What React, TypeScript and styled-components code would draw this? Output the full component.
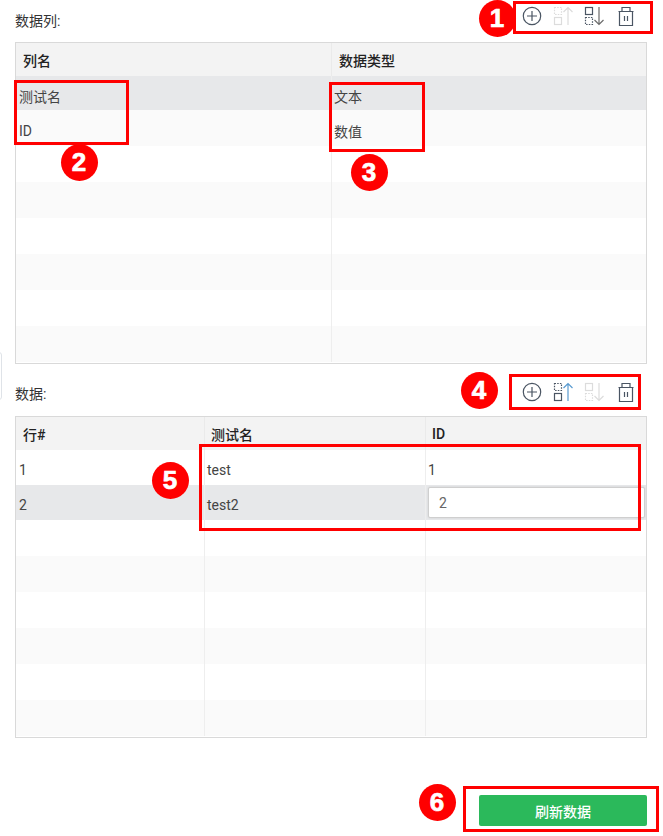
import React from "react";
import styled, { createGlobalStyle } from "styled-components";

const Global = createGlobalStyle`
  html, body { margin: 0; padding: 0; background: #fff; }
  body { font-family: Roboto, "Noto Sans CJK SC", sans-serif; font-size: 14px; color: #333; }
`;

const Page = styled.div`
  position: relative;
  width: 663px;
  height: 836px;
  overflow: hidden;
  padding: 0 16px 0 15px;
  box-sizing: border-box;
`;
const SectionHead = styled.div<{ $h: number; $iconY: number }>`
  height: ${(p) => p.$h}px;
  display: flex;
  justify-content: space-between;
  align-items: flex-start;
  padding-top: ${(p) => p.$iconY}px;
  box-sizing: border-box;
`;
const Label = styled.div<{ $top: number }>`
  margin-top: ${(p) => p.$top}px;
  font-size: 14px;
  line-height: 18px;
  color: #333;
`;
const Toolbar = styled.div`
  display: flex;
  gap: 9px;
  padding-right: 11px;
`;
const IconBtn = styled.span`
  display: block;
  width: 22px;
  height: 22px;
`;
const TableBox = styled.div`
  border: 1px solid #d9d9d9;
  height: 322px;
  box-sizing: border-box;
  overflow: hidden;
`;
const Row = styled.div<{ $cols: string; $h: number; $bg: string }>`
  display: grid;
  grid-template-columns: ${(p) => p.$cols};
  height: ${(p) => p.$h}px;
  background: ${(p) => p.$bg};
`;
const HeadCell = styled.div<{ $pad?: number }>`
  border-right: 1px solid #eaeaea;
  padding: 0 ${(p) => p.$pad ?? 7}px;
  display: flex;
  align-items: center;
  font-weight: 500;
  font-size: 14px;
  color: #222;
  &:last-child { border-right: 0; }
`;
const Cell = styled.div`
  position: relative;
  border-right: 1px solid #eeeeee;
  padding: 5px 3px 0;
  display: flex;
  align-items: center;
  font-size: 14px;
  color: #444;
  &:not(:first-child) { padding-left: 2px; }
  &:last-child { border-right: 0; }
`;
const EditBox = styled.div`
  position: absolute;
  left: 2px;
  right: 1px;
  top: 2px;
  height: 31px;
  background: #fff;
  border: 1px solid #cfcfcf;
  border-radius: 2px;
  box-shadow: 0 0 2px rgba(0, 0, 0, 0.12);
  box-sizing: border-box;
  padding-left: 10px;
  display: flex;
  align-items: center;
  font-size: 14px;
  color: #666;
`;
const Footer = styled.div`
  display: flex;
  justify-content: flex-end;
  margin-top: 57px;
`;
const Refresh = styled.button`
  width: 168px;
  height: 31px;
  border: 0;
  border-radius: 2px;
  background: #2bb95b;
  color: #fff;
  font: 500 14px Roboto, "Noto Sans CJK SC", sans-serif;
`;
const Mark = styled.div<{ $x: number; $y: number; $w: number; $h: number }>`
  position: absolute;
  left: ${(p) => p.$x}px;
  top: ${(p) => p.$y}px;
  width: ${(p) => p.$w}px;
  height: ${(p) => p.$h}px;
  border: 3px solid #ff0000;
  box-sizing: border-box;
  pointer-events: none;
`;
const Badge = styled.div<{ $x: number; $y: number }>`
  position: absolute;
  left: ${(p) => p.$x - 18.5}px;
  top: ${(p) => p.$y - 18.5}px;
  width: 37px;
  height: 37px;
  border-radius: 50%;
  background: #ff0000;
  color: #fff;
  font: 700 26px/37px "Liberation Sans", sans-serif;
  -webkit-text-stroke: 0.7px #fff;
  text-align: center;
`;
const EdgeTab = styled.div`
  position: absolute;
  left: -10px;
  top: 352px;
  width: 12px;
  height: 48px;
  border: 1px solid #dfe3e8;
  border-radius: 3px;
  box-sizing: border-box;
`;

const Plus = () => (
  <svg width="22" height="22" viewBox="0 0 22 22" fill="none" stroke="#4a5563" strokeWidth="1.2">
    <circle cx="11" cy="11" r="8.7" />
    <path d="M11 6v10M6 11h10" />
  </svg>
);
const MoveUp = ({ on }: { on: boolean }) => {
  const c = on ? "#4a5563" : "#dcdcdc";
  return (
    <svg width="22" height="22" viewBox="0 0 22 22" fill="none" stroke={c} strokeWidth="1.2">
      <rect x="2.5" y="2.5" width="7" height="7" strokeDasharray="1.5 1.2" />
      <rect x="2.5" y="12.5" width="7" height="7" />
      <path d="M16 20V2.5M11.5 7L16 2.5L20.5 7" stroke={on ? "#5a9bd0" : c} />
    </svg>
  );
};
const MoveDown = ({ on }: { on: boolean }) => {
  const c = on ? "#4a5563" : "#dcdcdc";
  return (
    <svg width="22" height="22" viewBox="0 0 22 22" fill="none" stroke={c} strokeWidth="1.2">
      <rect x="2.5" y="2.5" width="7" height="7" />
      <rect x="2.5" y="12.5" width="7" height="7" strokeDasharray="1.5 1.2" />
      <path d="M16 2v17.5M11.5 15L16 19.5L20.5 15" stroke={on ? "#6b6b6b" : c} />
    </svg>
  );
};
const Trash = () => (
  <svg width="22" height="22" viewBox="0 0 22 22" fill="none" stroke="#4a5563" strokeWidth="1.2">
    <path d="M4.5 6.5h15M5.5 6.5v14h13v-14M8 6.5V2.5h8v4" />
    <path d="M10.5 11v5M13.5 11v5" />
  </svg>
);

const Tools = ({ up, down }: { up: boolean; down: boolean }) => (
  <Toolbar>
    <IconBtn><Plus /></IconBtn>
    <IconBtn><MoveUp on={up} /></IconBtn>
    <IconBtn><MoveDown on={down} /></IconBtn>
    <IconBtn><Trash /></IconBtn>
  </Toolbar>
);

const SELECTED = "#e7e8ea";
const STRIPE = "#fafafa";

const cols1 = "316px 1fr";
const cols2 = "189px 221px 1fr";

const rows1: { cells: string[]; bg: string; h: number }[] = [
  { cells: ["测试名", "文本"], bg: SELECTED, h: 34 },
  { cells: ["ID", "数值"], bg: STRIPE, h: 36 },
  { cells: ["", ""], bg: "#fff", h: 36 },
  { cells: ["", ""], bg: STRIPE, h: 36 },
  { cells: ["", ""], bg: "#fff", h: 36 },
  { cells: ["", ""], bg: STRIPE, h: 36 },
  { cells: ["", ""], bg: "#fff", h: 36 },
  { cells: ["", ""], bg: STRIPE, h: 36 },
];
const rows2: { cells: string[]; bg: string; h: number }[] = [
  { cells: ["1", "test", "1"], bg: "#fff", h: 35 },
  { cells: ["2", "test2", ""], bg: SELECTED, h: 35 },
  { cells: ["", "", ""], bg: "#fff", h: 36 },
  { cells: ["", "", ""], bg: STRIPE, h: 36 },
  { cells: ["", "", ""], bg: "#fff", h: 36 },
  { cells: ["", "", ""], bg: STRIPE, h: 36 },
  { cells: ["", "", ""], bg: "#fff", h: 36 },
  { cells: ["", "", ""], bg: STRIPE, h: 36 },
];

export default function App() {
  return (
    <Page>
      <Global />
      <SectionHead $h={42} $iconY={5}>
        <Label $top={7}>数据列:</Label>
        <Tools up={false} down={true} />
      </SectionHead>
      <TableBox>
        <Row $cols={cols1} $h={33} $bg="#f3f3f3">
          <HeadCell>列名</HeadCell>
          <HeadCell>数据类型</HeadCell>
        </Row>
        {rows1.map((r, i) => (
          <Row key={i} $cols={cols1} $h={r.h} $bg={r.bg}>
            {r.cells.map((c, j) => <Cell key={j}>{c}</Cell>)}
          </Row>
        ))}
      </TableBox>
      <SectionHead $h={52} $iconY={17}>
        <Label $top={4}>数据:</Label>
        <Tools up={true} down={false} />
      </SectionHead>
      <TableBox>
        <Row $cols={cols2} $h={33} $bg="#f3f3f3">
          <HeadCell>行#</HeadCell>
          <HeadCell $pad={6}>测试名</HeadCell>
          <HeadCell $pad={6}>ID</HeadCell>
        </Row>
        {rows2.map((r, i) => (
          <Row key={i} $cols={cols2} $h={r.h} $bg={r.bg}>
            {r.cells.map((c, j) => (
              <Cell key={j}>
                {c}
                {i === 1 && j === 2 && <EditBox>2</EditBox>}
              </Cell>
            ))}
          </Row>
        ))}
      </TableBox>
      <Footer>
        <Refresh>刷新数据</Refresh>
      </Footer>

      <EdgeTab />
      <Mark $x={513} $y={1} $w={140} $h={33} />
      <Mark $x={14} $y={80} $w={115} $h={65} />
      <Mark $x={329} $y={82} $w={96} $h={70} />
      <Mark $x={509} $y={374} $w={132} $h={36} />
      <Mark $x={199} $y={444} $w={442} $h={87} />
      <Mark $x={463} $y={786} $w={196} $h={46} />
      <Badge $x={497} $y={18}>1</Badge>
      <Badge $x={79} $y={162}>2</Badge>
      <Badge $x={369} $y={172}>3</Badge>
      <Badge $x={479} $y={390}>4</Badge>
      <Badge $x={170} $y={480}>5</Badge>
      <Badge $x={437} $y={802}>6</Badge>
    </Page>
  );
}
